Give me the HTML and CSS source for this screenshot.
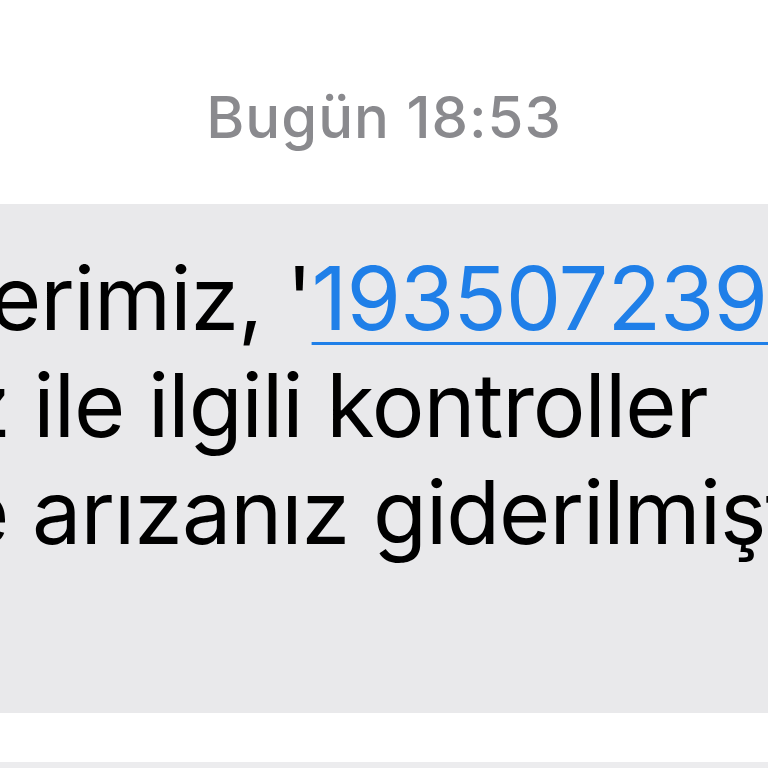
FILE: index.html
```html
<!DOCTYPE html>
<html lang="tr">
<head>
<meta charset="utf-8">
<link rel="stylesheet" href="styles.css">
</head>
<body>
<div class="screen">
  <div class="stamp">Bugün 18:53</div>
  <div class="bubble">
    <div class="line l1">erimiz, '<a class="link" href="#">1935072395</a></div>
    <div class="line l2">z ile ilgili kontroller</div>
    <div class="line l3">e arızanız giderilmiştir.</div>
  </div>
  <div class="composer"></div>
</div>
</body>
</html>
```
FILE: styles.css
```css
html, body {
  margin: 0;
  padding: 0;
  background: #ffffff;
}
.screen {
  width: 768px;
  height: 768px;
  overflow: hidden;
  display: flex;
  flex-direction: column;
  padding-top: 83px;
  box-sizing: border-box;
  font-family: Inter, "Liberation Sans", sans-serif;
}
.stamp {
  font-size: 58px;
  line-height: 68px;
  font-weight: 500;
  color: #8a8a8e;
  text-align: center;
  letter-spacing: 1px;
}
.bubble {
  margin-top: 53px;
  height: 509px;
  box-sizing: border-box;
  background: #e9e9eb;
  padding-top: 41px;
  overflow: hidden;
}
.line {
  font-size: 88px;
  line-height: 107px;
  color: #000000;
  white-space: nowrap;
  letter-spacing: -1px;
}
.l1 { text-indent: -10px; }
.l2 { text-indent: -38px; }
.l3 { text-indent: -42px; }
.link {
  color: #1f7fe8;
  text-decoration: underline;
  text-decoration-thickness: 3px;
  text-underline-offset: 12px;
}
.composer {
  margin-top: 49px;
  height: 6px;
  background: #ececee;
}
```
